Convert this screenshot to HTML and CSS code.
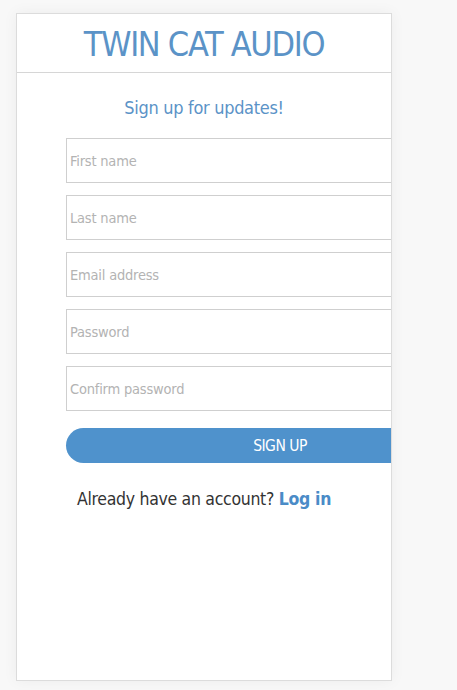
FILE: index.html
```html
<!DOCTYPE html>
<html>
<head>
<meta charset="utf-8">
<link rel="stylesheet" href="styles.css">
</head>
<body>
<div class="card">
  <header class="card-header">
    <h1 class="brand">TWIN CAT AUDIO</h1>
  </header>
  <form class="signup">
    <h2 class="signup-title">Sign up for updates!</h2>
    <input class="field" type="text" placeholder="First name">
    <input class="field" type="text" placeholder="Last name">
    <input class="field" type="email" placeholder="Email address">
    <input class="field" type="password" placeholder="Password">
    <input class="field" type="password" placeholder="Confirm password">
    <button class="submit" type="button">SIGN UP</button>
    <p class="login">Already have an account? <a href="#" class="login-link">Log in</a></p>
  </form>
</div>
</body>
</html>
```
FILE: styles.css
```css
html, body {
  margin: 0;
  padding: 0;
}
body {
  background: #f8f8f8;
  font-family: "DejaVu Sans Condensed", "DejaVu Sans", sans-serif;
  padding: 13px 0 10px 16px;
}
.card {
  width: 374px;
  height: 666px;
  background: #fff;
  border: 1px solid #dcdcdc;
  box-shadow: 0 0 14px rgba(0,0,0,0.05);
  overflow: hidden;
}
.card-header {
  height: 59px;
  border-bottom: 1px solid #d6d6d6;
  display: flex;
  justify-content: center;
  align-items: center;
  padding-top: 1px;
  box-sizing: border-box;
}
.brand {
  margin: 0;
  font-weight: normal;
  font-size: 34px;
  letter-spacing: -1.3px;
  color: #5b93c7;
}
.signup {
  display: flex;
  flex-direction: column;
  padding-left: 49px;
}
.signup-title {
  margin: 24px 0 20px 0;
  width: 276px;
  text-align: center;
  font-weight: normal;
  font-size: 18px;
  letter-spacing: -0.3px;
  color: #5b93c7;
}
.field {
  box-sizing: border-box;
  width: 428px;
  height: 45px;
  margin: 0 0 12px 0;
  border: 1px solid #cfcfcf;
  padding: 0 3px;
  font-family: inherit;
  font-size: 14.5px;
  letter-spacing: -0.2px;
  color: #555;
}
.field::placeholder {
  color: #b3b3b3;
}
.submit {
  width: 428px;
  height: 35px;
  margin-top: 5px;
  border: none;
  border-radius: 18px;
  background: #4f92cc;
  color: #fff;
  font-family: inherit;
  font-size: 15.5px;
  letter-spacing: -0.5px;
  padding: 0;
}
.login {
  margin: 26px 0 0 11px;
  white-space: nowrap;
  font-size: 17.5px;
  letter-spacing: -0.3px;
  color: #333;
}
.login-link {
  color: #4a8bc7;
  text-decoration: none;
  font-weight: bold;
}
```
